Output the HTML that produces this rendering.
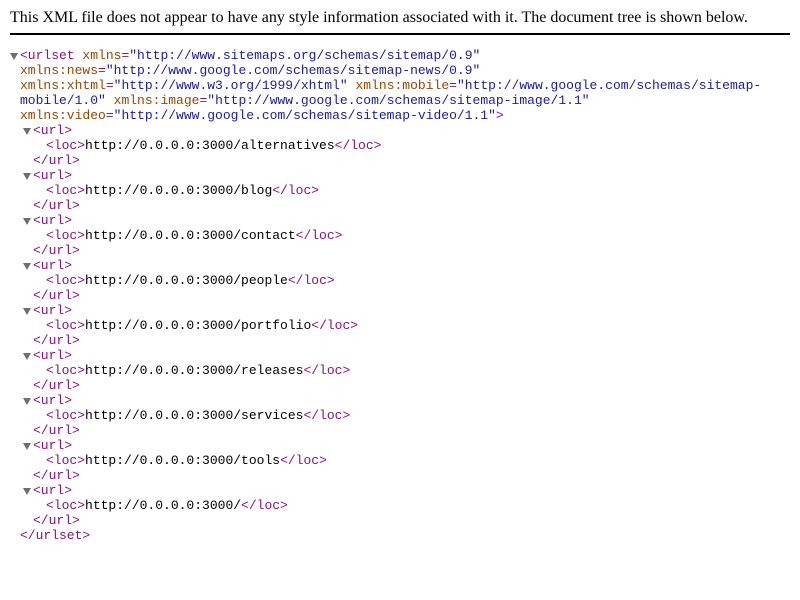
<!DOCTYPE html>
<html><head><meta charset="utf-8"><style>
body{margin:0;background:#fff;}
.hdr{position:absolute;left:10px;top:9px;width:780px;font:16px "Liberation Serif",serif;line-height:18px;padding-bottom:6px;border-bottom:2px solid #000;color:#000;}
.t{position:absolute;left:0;top:48px;font:13px "Liberation Mono",monospace;line-height:15px;color:#000;}
.l{height:15px;position:relative;white-space:pre;}
.p0{padding-left:20px}.p1{padding-left:33px}.p2{padding-left:46px}
.g{color:#881280}.a{color:#994500}.v{color:#1a1aa6}
.ar{position:absolute;width:0;height:0;border-left:4px solid transparent;border-right:4px solid transparent;border-top:7px solid #6e6e6e;top:5px;}
</style></head><body>
<div class="hdr">This XML file does not appear to have any style information associated with it. The document tree is shown below.</div>
<div class="t">
<div class="l p0"><span class="ar" style="left:10px"></span><span class="g">&lt;urlset</span> <span class="a">xmlns</span><span class="g">=</span><span class="v">"http://www.sitemaps.org/schemas/sitemap/0.9"</span></div>
<div class="l p0"><span class="a">xmlns:news</span><span class="g">=</span><span class="v">"http://www.google.com/schemas/sitemap-news/0.9"</span></div>
<div class="l p0"><span class="a">xmlns:xhtml</span><span class="g">=</span><span class="v">"http://www.w3.org/1999/xhtml"</span> <span class="a">xmlns:mobile</span><span class="g">=</span><span class="v">"http://www.google.com/schemas/sitemap-</span></div>
<div class="l p0"><span class="v">mobile/1.0"</span> <span class="a">xmlns:image</span><span class="g">=</span><span class="v">"http://www.google.com/schemas/sitemap-image/1.1"</span></div>
<div class="l p0"><span class="a">xmlns:video</span><span class="g">=</span><span class="v">"http://www.google.com/schemas/sitemap-video/1.1"</span><span class="g">&gt;</span></div>
<div class="l p1"><span class="ar" style="left:23px"></span><span class="g">&lt;url&gt;</span></div>
<div class="l p2"><span class="g">&lt;loc&gt;</span>http://0.0.0.0:3000/alternatives<span class="g">&lt;/loc&gt;</span></div>
<div class="l p1"><span class="g">&lt;/url&gt;</span></div>
<div class="l p1"><span class="ar" style="left:23px"></span><span class="g">&lt;url&gt;</span></div>
<div class="l p2"><span class="g">&lt;loc&gt;</span>http://0.0.0.0:3000/blog<span class="g">&lt;/loc&gt;</span></div>
<div class="l p1"><span class="g">&lt;/url&gt;</span></div>
<div class="l p1"><span class="ar" style="left:23px"></span><span class="g">&lt;url&gt;</span></div>
<div class="l p2"><span class="g">&lt;loc&gt;</span>http://0.0.0.0:3000/contact<span class="g">&lt;/loc&gt;</span></div>
<div class="l p1"><span class="g">&lt;/url&gt;</span></div>
<div class="l p1"><span class="ar" style="left:23px"></span><span class="g">&lt;url&gt;</span></div>
<div class="l p2"><span class="g">&lt;loc&gt;</span>http://0.0.0.0:3000/people<span class="g">&lt;/loc&gt;</span></div>
<div class="l p1"><span class="g">&lt;/url&gt;</span></div>
<div class="l p1"><span class="ar" style="left:23px"></span><span class="g">&lt;url&gt;</span></div>
<div class="l p2"><span class="g">&lt;loc&gt;</span>http://0.0.0.0:3000/portfolio<span class="g">&lt;/loc&gt;</span></div>
<div class="l p1"><span class="g">&lt;/url&gt;</span></div>
<div class="l p1"><span class="ar" style="left:23px"></span><span class="g">&lt;url&gt;</span></div>
<div class="l p2"><span class="g">&lt;loc&gt;</span>http://0.0.0.0:3000/releases<span class="g">&lt;/loc&gt;</span></div>
<div class="l p1"><span class="g">&lt;/url&gt;</span></div>
<div class="l p1"><span class="ar" style="left:23px"></span><span class="g">&lt;url&gt;</span></div>
<div class="l p2"><span class="g">&lt;loc&gt;</span>http://0.0.0.0:3000/services<span class="g">&lt;/loc&gt;</span></div>
<div class="l p1"><span class="g">&lt;/url&gt;</span></div>
<div class="l p1"><span class="ar" style="left:23px"></span><span class="g">&lt;url&gt;</span></div>
<div class="l p2"><span class="g">&lt;loc&gt;</span>http://0.0.0.0:3000/tools<span class="g">&lt;/loc&gt;</span></div>
<div class="l p1"><span class="g">&lt;/url&gt;</span></div>
<div class="l p1"><span class="ar" style="left:23px"></span><span class="g">&lt;url&gt;</span></div>
<div class="l p2"><span class="g">&lt;loc&gt;</span>http://0.0.0.0:3000/<span class="g">&lt;/loc&gt;</span></div>
<div class="l p1"><span class="g">&lt;/url&gt;</span></div>
<div class="l p0"><span class="g">&lt;/urlset&gt;</span></div>
</div>
</body></html>
